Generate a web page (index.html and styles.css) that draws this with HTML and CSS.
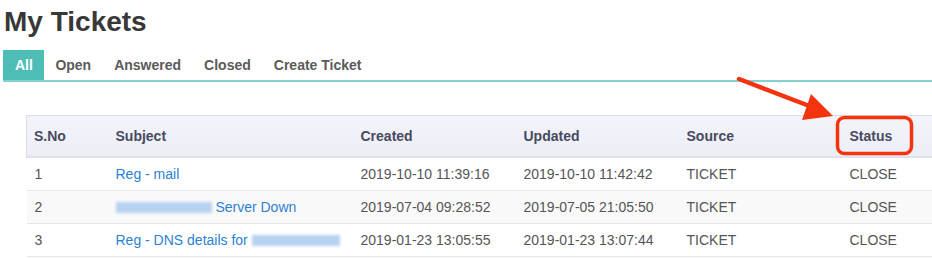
FILE: index.html
```html
<!DOCTYPE html>
<html lang="en">
<head>
    <meta charset="UTF-8">
    <title>My Tickets</title>
    <link rel="stylesheet" href="styles.css">
</head>
<body>
    <h1 class="page-title">My Tickets</h1>
    <ul class="tabs">
        <li><a href="#" class="active">All</a></li>
        <li><a href="#">Open</a></li>
        <li><a href="#">Answered</a></li>
        <li><a href="#">Closed</a></li>
        <li><a href="#">Create Ticket</a></li>
    </ul>

    <table class="tickets">
        <colgroup>
            <col class="c-no"><col class="c-subject"><col class="c-date"><col class="c-date"><col class="c-date"><col class="c-status">
        </colgroup>
        <thead>
            <tr>
                <th>S.No</th>
                <th>Subject</th>
                <th>Created</th>
                <th>Updated</th>
                <th>Source</th>
                <th>Status</th>
            </tr>
        </thead>
        <tbody>
            <tr>
                <td>1</td>
                <td><a href="#">Reg - mail</a></td>
                <td>2019-10-10 11:39:16</td>
                <td>2019-10-10 11:42:42</td>
                <td>TICKET</td>
                <td>CLOSE</td>
            </tr>
            <tr>
                <td>2</td>
                <td><a href="#"><span class="redact r-long"></span> Server Down</a></td>
                <td>2019-07-04 09:28:52</td>
                <td>2019-07-05 21:05:50</td>
                <td>TICKET</td>
                <td>CLOSE</td>
            </tr>
            <tr>
                <td>3</td>
                <td><a href="#">Reg - DNS details for <span class="redact r-short"></span></a></td>
                <td>2019-01-23 13:05:55</td>
                <td>2019-01-23 13:07:44</td>
                <td>TICKET</td>
                <td>CLOSE</td>
            </tr>
        </tbody>
    </table>

    <!-- annotation drawn on top of the screenshot -->
    <svg class="callout" width="932" height="258" viewBox="0 0 932 258">
        <line x1="739" y1="79" x2="812" y2="107" stroke="#f4340f" stroke-width="4.5" stroke-linecap="round"/>
        <polygon points="833,116 802,120 811,94" fill="#f4340f"/>
        <rect x="837.5" y="117.5" width="74" height="36" rx="7" fill="none" stroke="#f4340f" stroke-width="3.5"/>
    </svg>
</body>
</html>
```

FILE: styles.css
```css
html, body {
    margin: 0;
    padding: 0;
    background: #fff;
    overflow: hidden;
}
body {
    font-family: "Liberation Sans", Arial, sans-serif;
    color: #555;
    width: 932px;
    height: 258px;
    position: relative;
}
.page-title {
    margin: 6px 0 12px 4px;
    font-size: 28px;
    line-height: 32px;
    font-weight: bold;
    color: #383838;
}
.tabs {
    display: flex;
    margin: 0 0 0 3px;
    padding: 0;
    list-style: none;
    border-bottom: 2px solid #84d2cd;
}
.tabs a {
    display: block;
    padding: 0 11.5px;
    line-height: 30px;
    font-size: 14px;
    font-weight: bold;
    color: #5a5a5a;
    text-decoration: none;
}
.tabs a.active {
    padding: 0 11px 0 12px;
    background: #4dbdb6;
    color: #fff;
}
.tickets {
    margin: 33px 0 0 26px;
    border-collapse: collapse;
    table-layout: fixed;
    width: 906px;
    font-size: 14px;
}
.c-no { width: 81px; }
.c-subject { width: 245px; }
.c-date { width: 163px; }
.c-status { width: 91px; }
.tickets th {
    height: 40px;
    padding: 0 8px;
    text-align: left;
    font-weight: bold;
    color: #474a60;
    background: linear-gradient(#f3f4fa, #eceef6);
    border-top: 1px solid #dadde8;
    border-bottom: 2px solid #dfe1ea;
}
.tickets th:first-child {
    border-left: 1px solid #dadde8;
    padding-left: 7px;
}
.tickets td {
    height: 32px;
    padding: 0 8px;
    border-bottom: 1px solid #e6e6e6;
    color: #555;
    white-space: nowrap;
}
.tickets tbody tr:nth-child(even) td {
    background: #f9f9f9;
}
.tickets a {
    color: #2e7fd2;
    text-decoration: none;
}
.redact {
    display: inline-block;
    height: 11px;
    vertical-align: -1px;
    background: #b6d2f0;
    filter: blur(1.5px);
}
.r-long { width: 96px; }
.r-short { width: 88px; }
.callout {
    position: absolute;
    left: 0;
    top: 0;
    pointer-events: none;
}
```
